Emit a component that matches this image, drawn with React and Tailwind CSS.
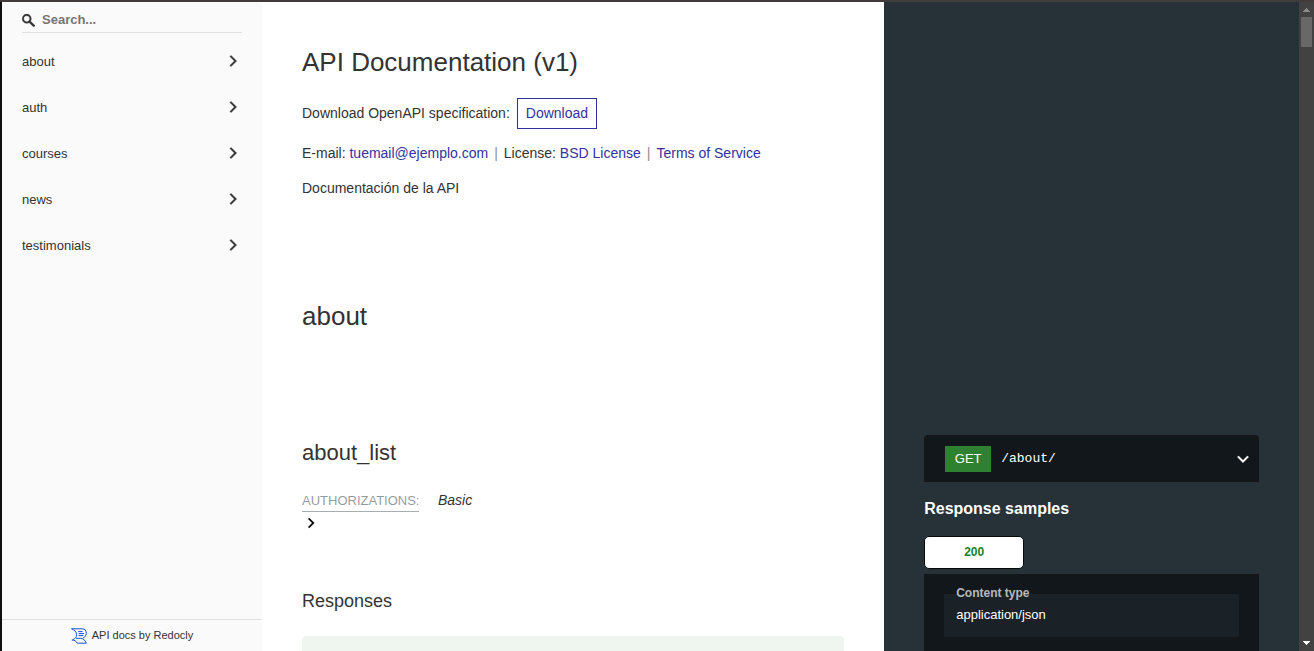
const groups = ['about', 'auth', 'courses', 'news', 'testimonials'];

function Chevron({ className }) {
  return (
    <svg viewBox="0 0 24 24" aria-hidden="true" className={className}>
      <polygon
        fill="currentColor"
        stroke="currentColor"
        strokeWidth="0.5"
        points="17.3 8.3 12 13.6 6.7 8.3 5.3 9.7 12 16.4 18.7 9.7"
      />
    </svg>
  );
}

function SearchIcon() {
  return (
    <svg viewBox="0 0 1000 1000" aria-hidden="true" className="size-[13px] shrink-0 text-[#333333]">
      <path
        fill="currentColor"
        stroke="currentColor"
        strokeWidth="20"
        d="M968.2,849.4L667.3,549c83.9-136.5,66.7-317.4-51.7-435.6C477.1-25,252.5-25,113.9,113.4c-138.5,138.3-138.5,362.6,0,501C219.2,719.7,374.2,744.9,503.6,689.4l47.4-22.9l301.9,301.4c43.6,43.6,76.9,14.9,104.2-12.4C984.3,928.3,1011.8,893,968.2,849.4z M524.5,522c-88.9,88.7-233,88.7-321.8,0c-88.9-88.7-88.9-232.6,0-321.3c88.9-88.7,233-88.7,321.8,0C613.4,289.4,613.4,433.3,524.5,522z"
      />
    </svg>
  );
}

function RedoclyLogo() {
  return (
    <svg viewBox="0 0 16 16" aria-hidden="true" className="size-4 shrink-0" fill="none" stroke="#1650d8">
      <path strokeWidth="1" d="M0.5 0.8H11.2C13.8 0.8 15.3 2.6 15.3 5.2C15.3 7.6 14 9.2 12 10" />
      <path strokeWidth="1" d="M0.5 0.8C3.6 1.7 5.6 4 5.6 6.8C5.6 9 4.4 10.6 1.6 11.8" />
      <path strokeWidth="1" d="M5 10.3H9.6C12.4 10.6 14.2 12.4 15.3 15.2H6.4C5.4 13.2 3.6 12 0.8 12" />
      <path strokeWidth="1" d="M7.2 3.6H11.6M7.8 5.6H13M7.6 7.6H12.4" />
    </svg>
  );
}

function Sidebar() {
  return (
    <aside className="flex w-[260px] shrink-0 flex-col bg-[#fafafa]">
      <label className="mx-5 mt-2 flex h-[23px] items-center gap-[7px] border-b border-[#e1e1e1] pb-0.5">
        <SearchIcon />
        <input
          type="text"
          aria-label="Search"
          placeholder="Search..."
          className="min-w-0 flex-1 bg-transparent text-[13px] leading-4 font-bold text-[#333333] outline-none placeholder:text-[#757575]"
        />
      </label>
      <nav className="mt-2 flex flex-1 flex-col gap-1">
        {groups.map((name) => (
          <a
            key={name}
            href={`#tag/${name}`}
            className="flex h-[42px] items-center justify-between pr-[19px] pl-5 text-[13px] text-[#333333]"
          >
            {name}
            <Chevron className="mb-0.5 size-5 -rotate-90" />
          </a>
        ))}
      </nav>
      <a
        href="https://redocly.com/redoc/"
        className="flex h-8 items-center justify-center gap-[5px] border-t border-[#e1e1e1] text-[11px] text-[#333333]"
      >
        <RedoclyLogo />
        API docs by Redocly
      </a>
    </aside>
  );
}

function Divider() {
  return <span className="mx-1.5 text-[#8c8c8c]">|</span>;
}

function Documentation() {
  return (
    <main className="w-3/5 bg-white px-10 pt-10 text-sm leading-[21px] text-[#333333]">
      <h1 className="text-[26px] leading-10">API Documentation (v1)</h1>
      <p className="mt-4 flex items-center gap-[7px]">
        Download OpenAPI specification:
        <a href="#download" className="border border-[#32329f] px-2 py-1 text-[#32329f]">
          Download
        </a>
      </p>
      <p className="mt-3.5">
        E-mail: <a href="mailto:tuemail@ejemplo.com" className="text-[#32329f]">tuemail@ejemplo.com</a>
        <Divider />
        License: <a href="#license" className="text-[#32329f]">BSD License</a>
        <Divider />
        <a href="#terms" className="text-[#32329f]">Terms of Service</a>
      </p>
      <p className="mt-3.5">Documentación de la API</p>

      <h2 className="mt-[97px] text-[26px] leading-10">about</h2>

      <h2 className="mt-[99px] text-[22px] leading-9">about_list</h2>
      <div className="mt-[19px] flex items-start">
        <div className="w-[136px]">
          <h5 className="inline-block border-b border-[#263238]/40 text-[13px] leading-[21px] text-[#263238]/50">
            AUTHORIZATIONS:
          </h5>
          <button type="button" aria-label="Expand authorizations" className="flex h-[22px] items-center text-black">
            <Chevron className="size-[18px] -rotate-90" />
          </button>
        </div>
        <span className="italic">Basic</span>
      </div>

      <h3 className="mt-[53px] text-lg leading-7">Responses</h3>
      <button
        type="button"
        aria-label="Response 200"
        className="mt-[21px] block h-10 w-full rounded-sm bg-[#1d8127]/[0.07]"
      />
    </main>
  );
}

function Samples() {
  return (
    <section className="w-2/5 bg-[#263238] px-10 pt-[433px] text-white">
      <button type="button" className="flex h-[47px] w-full items-center rounded-t bg-[#11171a] pr-1.5 pl-[21px]">
        <span className="w-[46px] bg-[#2f8132] py-[3px] text-center text-[13px] leading-5">GET</span>
        <span className="ml-2.5 flex-1 pt-px text-left font-['Liberation_Mono',monospace] text-[13px]">/about/</span>
        <Chevron className="size-5" />
      </button>
      <h3 className="mt-[13px] text-base leading-7 font-bold">Response samples</h3>
      <div role="tablist" className="mt-[13px] flex">
        <button
          type="button"
          role="tab"
          aria-selected="true"
          className="h-[33px] w-[100px] rounded-[5px] border border-[#07090b] bg-white pb-0.5 text-xs font-bold text-[#1d8127]"
        >
          200
        </button>
      </div>
      <div role="tabpanel" className="mt-[5px] bg-[#11171a] px-5 pt-2.5 pb-10">
        <label htmlFor="content-type" className="block h-2.5 px-3 text-xs leading-[18px] font-bold text-white/70">
          <span className="relative">Content type</span>
        </label>
        <select
          id="content-type"
          defaultValue="application/json"
          className="h-[43px] w-full appearance-none bg-[#1a2227] px-3 pb-0.5 text-[13px] text-white"
        >
          <option>application/json</option>
        </select>
      </div>
    </section>
  );
}

function ScrollRail() {
  return (
    <div aria-hidden="true" className="flex w-[15px] shrink-0 flex-col items-center bg-[#424242]">
      <svg viewBox="0 0 15 15" className="size-[15px] shrink-0">
        <path fill="#8b8b8b" d="M7 6h1v1h1v1h1v1h1v1H4V9h1V8h1V7h1z" />
      </svg>
      <div className="h-[30px] w-[11px] bg-[#686868]" />
      <svg viewBox="0 0 15 15" className="mt-auto size-[15px] shrink-0">
        <path fill="#ffffff" d="M4 5h7v1h-1v1H9v1H8v1H7V8H6V7H5V6H4z" />
      </svg>
    </div>
  );
}

export default function App() {
  return (
    <div className="flex h-screen flex-col overflow-hidden bg-[#0f0f10] font-['Liberation_Sans',Arial,sans-serif]">
      <div className="h-0.5 shrink-0 bg-[#403c3c]" />
      <div className="flex min-h-0 flex-1 pl-0.5">
        <Sidebar />
        <div className="flex min-w-0 flex-1 overflow-hidden">
          <Documentation />
          <Samples />
        </div>
        <ScrollRail />
      </div>
    </div>
  );
}
